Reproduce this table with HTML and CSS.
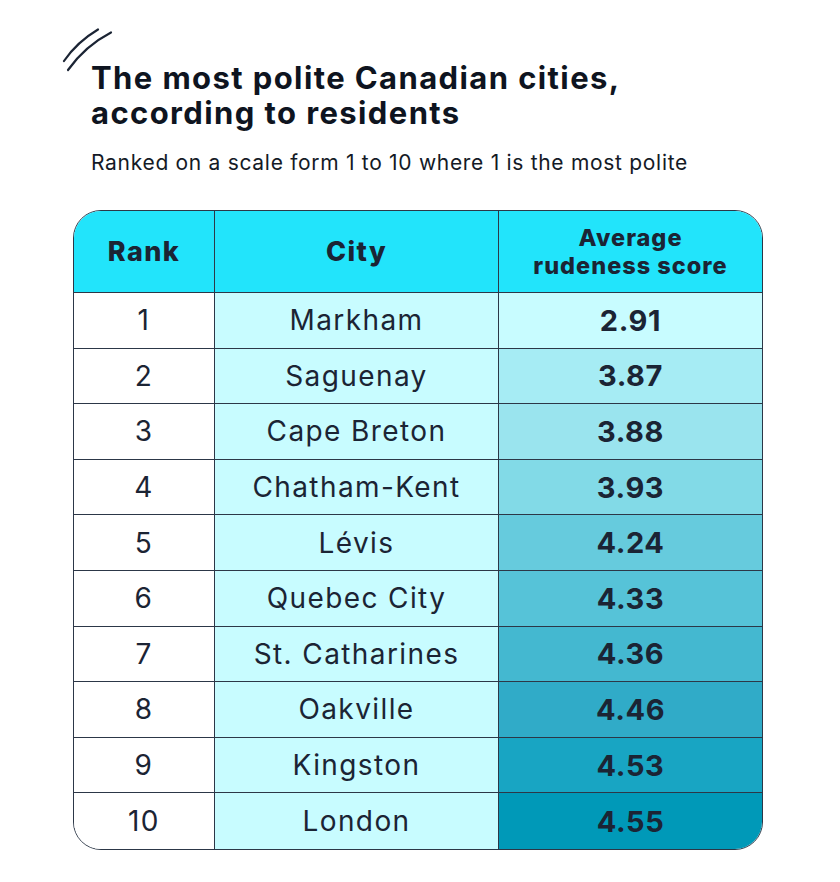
FILE: index.html
```html
<!DOCTYPE html>
<html>
<head>
<meta charset="utf-8">
<link rel="stylesheet" href="styles.css">
</head>
<body>
<div class="page">
  <header class="head">
    <svg class="logo" width="52" height="50" viewBox="0 0 52 50">
      <path d="M37 1.5 Q16 14 3 33" fill="none" stroke="#1b2434" stroke-width="2.2" stroke-linecap="round"/>
      <path d="M50 4.5 Q24 18 7 42" fill="none" stroke="#1b2434" stroke-width="2.2" stroke-linecap="round"/>
    </svg>
    <h1 class="title">The most polite Canadian cities,<br>according to residents</h1>
    <p class="subtitle">Ranked on a scale form 1 to 10 where 1 is the most polite</p>
  </header>
  <div class="table">
    <div class="row hdr">
      <div class="cell c-rank">Rank</div>
      <div class="cell c-city">City</div>
      <div class="cell c-score">Average<br>rudeness score</div>
    </div>
    <div class="row"><div class="cell c-rank">1</div><div class="cell c-city">Markham</div><div class="cell c-score s1">2.91</div></div>
    <div class="row"><div class="cell c-rank">2</div><div class="cell c-city">Saguenay</div><div class="cell c-score s2">3.87</div></div>
    <div class="row"><div class="cell c-rank">3</div><div class="cell c-city">Cape Breton</div><div class="cell c-score s3">3.88</div></div>
    <div class="row"><div class="cell c-rank">4</div><div class="cell c-city">Chatham-Kent</div><div class="cell c-score s4">3.93</div></div>
    <div class="row"><div class="cell c-rank">5</div><div class="cell c-city">Lévis</div><div class="cell c-score s5">4.24</div></div>
    <div class="row"><div class="cell c-rank">6</div><div class="cell c-city">Quebec City</div><div class="cell c-score s6">4.33</div></div>
    <div class="row"><div class="cell c-rank">7</div><div class="cell c-city">St. Catharines</div><div class="cell c-score s7">4.36</div></div>
    <div class="row"><div class="cell c-rank">8</div><div class="cell c-city">Oakville</div><div class="cell c-score s8">4.46</div></div>
    <div class="row"><div class="cell c-rank">9</div><div class="cell c-city">Kingston</div><div class="cell c-score s9">4.53</div></div>
    <div class="row last"><div class="cell c-rank">10</div><div class="cell c-city">London</div><div class="cell c-score s10">4.55</div></div>
  </div>
</div>
</body>
</html>
```
FILE: styles.css
```css
* { box-sizing: border-box; }
html, body { margin: 0; padding: 0; background: #ffffff; }
body {
  font-family: "Inter", "Liberation Sans", sans-serif;
  color: #1b2434;
  width: 840px;
  height: 882px;
  overflow: hidden;
}
.page {
  padding: 28px 0 0 73px;
  display: flex;
  flex-direction: column;
}
.head {
  position: relative;
  padding-left: 18px;
}
.logo {
  position: absolute;
  left: -12px;
  top: 0;
}
.title {
  margin: 32px 0 0 0;
  font-size: 31px;
  line-height: 35px;
  font-weight: 700;
  letter-spacing: 1.4px;
  color: #0e1420;
}
.subtitle {
  margin: 20px 0 0 0;
  font-size: 21px;
  line-height: 26px;
  font-weight: 400;
  letter-spacing: 0.7px;
  color: #141a26;
}
.table {
  margin-top: 34px;
  width: 690px;
  border: 1.5px solid #2c3747;
  border-radius: 28px;
  overflow: hidden;
  display: flex;
  flex-direction: column;
}
.row {
  display: grid;
  grid-template-columns: 141px 284px 1fr;
  height: 55.6px;
  border-bottom: 1.5px solid #2c3747;
}
.row.last { border-bottom: none; }
.row.hdr {
  height: 82px;
  background: #22e4fb;
}
.cell {
  display: flex;
  align-items: center;
  justify-content: center;
  text-align: center;
  font-size: 28px;
  letter-spacing: 1.4px;
  color: #1b2434;
}
.c-rank, .c-city { border-right: 1.5px solid #2c3747; }
.c-rank { background: #ffffff; }
.c-city { background: #c8fcff; }
.c-score { font-weight: 700; font-size: 29px; letter-spacing: 0.6px; }
.hdr .cell {
  background: transparent;
  font-weight: 800;
  font-size: 27px;
  line-height: 30px;
  letter-spacing: 1.4px;
}
.hdr .c-score { font-size: 23.5px; line-height: 28px; letter-spacing: 1px; }
.s1 { background: #c8fcff; }
.s2 { background: #a6ecf4; }
.s3 { background: #9ae4ee; }
.s4 { background: #82dae7; }
.s5 { background: #66cbdd; }
.s6 { background: #56c3d8; }
.s7 { background: #44b8d0; }
.s8 { background: #30abc8; }
.s9 { background: #18a5c3; }
.s10 { background: #0099b8; }
```
